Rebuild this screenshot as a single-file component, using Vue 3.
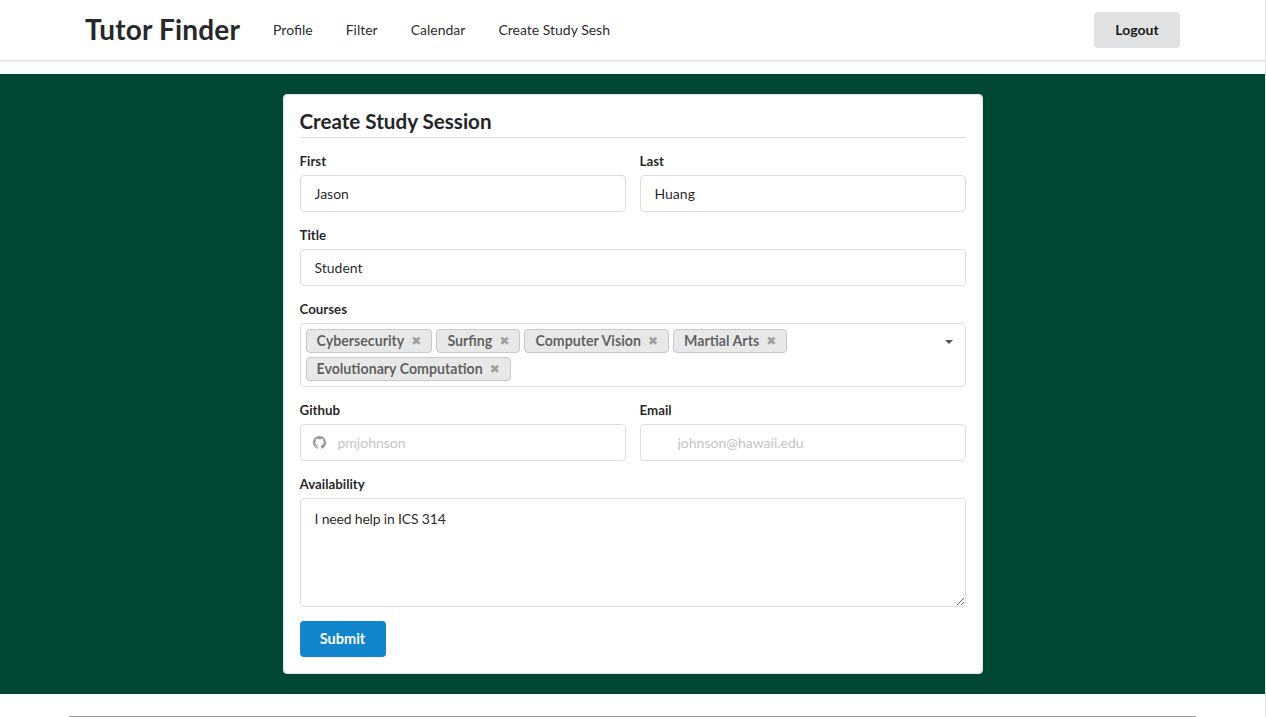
<script setup>
const courses = ['Cybersecurity', 'Surfing', 'Computer Vision', 'Martial Arts', 'Evolutionary Computation']
const links = ['Profile', 'Filter', 'Calendar', 'Create Study Sesh']
</script>

<template>
  <div class="page">
    <header class="nav">
      <div class="brand">Tutor Finder</div>
      <nav class="links">
        <a v-for="l in links" :key="l" class="link">{{ l }}</a>
      </nav>
      <button class="logout" type="button">Logout</button>
    </header>

    <main class="band">
      <form class="card" @submit.prevent>
        <h2 class="title">Create Study Session</h2>

        <div class="two">
          <div class="field">
            <label>First</label>
            <input class="input" value="Jason" />
          </div>
          <div class="field">
            <label>Last</label>
            <input class="input" value="Huang" />
          </div>
        </div>

        <div class="field">
          <label>Title</label>
          <input class="input" value="Student" />
        </div>

        <div class="field">
          <label>Courses</label>
          <div class="select">
            <span v-for="c in courses" :key="c" class="chip">{{ c }}<span class="x">✖</span></span>
            <span class="caret"></span>
          </div>
        </div>

        <div class="two">
          <div class="field">
            <label>Github</label>
            <div class="iconinput">
              <svg class="gh" viewBox="0 0 16 16" aria-hidden="true">
                <path fill="#9a9a9a" d="M8 0C3.58 0 0 3.58 0 8c0 3.54 2.29 6.53 5.47 7.59.4.07.55-.17.55-.38 0-.19-.01-.82-.01-1.49-2.01.37-2.53-.49-2.69-.94-.09-.23-.48-.94-.82-1.13-.28-.15-.68-.52-.01-.53.63-.01 1.08.58 1.23.82.72 1.21 1.87.87 2.33.66.07-.52.28-.87.51-1.07-1.78-.2-3.64-.89-3.64-3.95 0-.87.31-1.59.82-2.15-.08-.2-.36-1.02.08-2.12 0 0 .67-.21 2.2.82.64-.18 1.32-.27 2-.27s1.36.09 2 .27c1.53-1.04 2.2-.82 2.2-.82.44 1.1.16 1.92.08 2.12.51.56.82 1.27.82 2.15 0 3.07-1.87 3.75-3.65 3.95.29.25.54.73.54 1.48 0 1.07-.01 1.93-.01 2.2 0 .21.15.46.55.38A8.01 8.01 0 0 0 16 8c0-4.42-3.58-8-8-8z"/>
              </svg>
              <input class="input pad" placeholder="pmjohnson" />
            </div>
          </div>
          <div class="field">
            <label>Email</label>
            <input class="input pad" placeholder="johnson@hawaii.edu" />
          </div>
        </div>

        <div class="field">
          <label>Availability</label>
          <textarea class="area">I need help in ICS 314</textarea>
        </div>

        <button class="submit" type="submit">Submit</button>
      </form>
    </main>

    <footer class="foot"><hr class="rule" /></footer>
  </div>
</template>

<style>
html, body { margin: 0; padding: 0; overflow: hidden; background: #fff; }
</style>

<style scoped>
.page {
  box-sizing: border-box;
  width: 1266px;
  height: 717px;
  overflow: hidden;
  border-right: 1px solid #e6e6e6;
  font-family: Lato, "Liberation Sans", sans-serif;
  font-size: 14px;
  color: rgba(0, 0, 0, 0.87);
  display: flex;
  flex-direction: column;
}
.nav {
  height: 61px;
  flex: none;
  display: flex;
  align-items: center;
  padding: 0 85px;
  background: #fff;
  box-shadow: 0 1px 1px 0 rgba(34, 36, 38, 0.08);
  border-bottom: 1px solid #e0e1e2;
  box-sizing: border-box;
}
.brand {
  font-size: 28px;
  font-weight: 700;
  line-height: 28px;
  letter-spacing: 0.17px;
  color: #27282a;
  margin-right: 33px;
  padding-bottom: 2px;
  white-space: nowrap;
}
.links { display: flex; gap: 33px; flex: 1; padding-bottom: 2px; }
.link { color: rgba(0, 0, 0, 0.87); white-space: nowrap; }
.logout {
  width: 86px;
  height: 36px;
  border: 0;
  border-radius: 4px;
  background: #e0e1e2;
  color: rgba(0, 0, 0, 0.9);
  font: 700 14px Lato, sans-serif;
  padding: 0 0 2px;
}
.band {
  margin-top: 13px;
  height: 620px;
  flex: none;
  background: #004833;
  display: flex;
  justify-content: center;
  padding-top: 20px;
  box-sizing: border-box;
}
.card {
  box-sizing: border-box;
  width: 700px;
  height: 580px;
  background: #fff;
  border-radius: 4px;
  border: 1px solid #e5e6e7;
  padding: 14px 16px 16px;
  display: flex;
  flex-direction: column;
  gap: 15px;
}
.title {
  margin: 0;
  height: 28px;
  line-height: 24px;
  font-size: 20.6px;
  font-weight: 700;
  color: #242527;
  border-bottom: 1px solid #dcdcdd;
}
.two { display: grid; grid-template-columns: 326px 326px; column-gap: 14px; }
.field { display: flex; flex-direction: column; min-width: 0; }
label {
  font-size: 13.3px;
  font-weight: 700;
  line-height: 16px;
  height: 16px;
  margin-bottom: 6px;
  color: rgba(0, 0, 0, 0.87);
}
.input, .area {
  box-sizing: border-box;
  width: 100%;
  border: 1px solid #dcdee0;
  border-radius: 4px;
  font: 14px Lato, sans-serif;
  color: rgba(0, 0, 0, 0.87);
  outline: none;
  background: #fff;
}
.input { height: 37px; padding: 0 14px; }
.input::placeholder { color: #c4c4c4; opacity: 1; }
.pad { padding-left: 37px; }
.iconinput { position: relative; }
.gh {
  position: absolute;
  left: 13px;
  top: 12px;
  width: 13px;
  height: 13px;
}
.select {
  box-sizing: border-box;
  height: 64px;
  border: 1px solid #dcdee0;
  border-radius: 4px;
  padding: 5px 32px 0 5px;
  display: flex;
  flex-wrap: wrap;
  align-content: flex-start;
  gap: 4px;
  position: relative;
}
.chip {
  box-sizing: border-box;
  height: 24px;
  display: inline-flex;
  align-items: center;
  padding: 0 10px 2px;
  background: #e8e8e8;
  border: 1px solid #c8c8c8;
  border-radius: 4px;
  color: rgba(0, 0, 0, 0.6);
  font-weight: 700;
  font-size: 14.2px;
  white-space: nowrap;
}
.x {
  margin-left: 7px;
  margin-top: 2px;
  font-size: 12px;
  color: #9f9f9f;
  font-family: "DejaVu Sans", sans-serif;
}
.caret {
  position: absolute;
  right: 12px;
  top: 16px;
  width: 0;
  height: 0;
  border-left: 4px solid transparent;
  border-right: 4px solid transparent;
  border-top: 4px solid #555;
}
.area {
  height: 109px;
  padding: 11px 14px;
  line-height: 18px;
  letter-spacing: -0.18px;
  resize: vertical;
  display: block;
}
.submit {
  width: 86px;
  height: 36px;
  flex: none;
  margin-top: -1px;
  border: 0;
  border-radius: 4px;
  background: #1084cd;
  color: #fff;
  font: 700 14.5px Lato, sans-serif;
  padding: 0 0 2px;
}
.foot { flex: 1; padding: 22px 69px 0; box-sizing: border-box; }
.rule { margin: 0; width: 1127px; border: 0; border-top: 1px solid #999; }
</style>
